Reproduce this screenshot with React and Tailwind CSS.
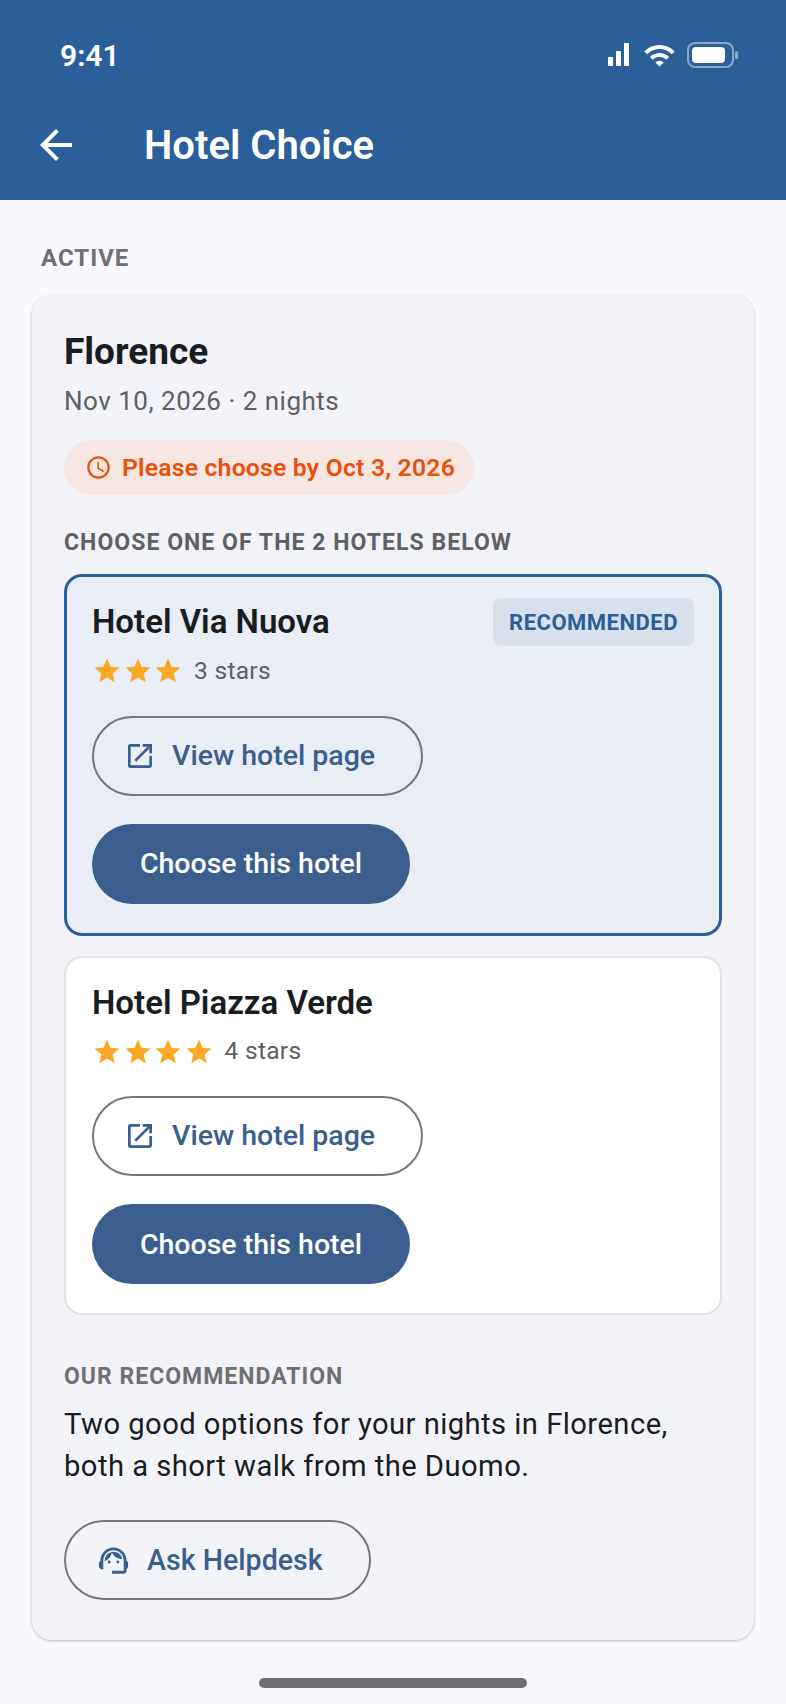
import React from 'react';
import { MdArrowBack, MdAccessTime, MdOpenInNew, MdStar, MdOutlineSupportAgent, MdWifi } from 'react-icons/md';

const hotels = [
  { name: 'Hotel Via Nuova', stars: 3, recommended: true },
  { name: 'Hotel Piazza Verde', stars: 4, recommended: false },
];

const SignalIcon = () => (
  <svg width="22" height="24" viewBox="0 0 22 24" fill="white">
    <rect x="0" y="14" width="5" height="9" rx="0.5" />
    <rect x="8" y="8" width="5" height="15" rx="0.5" />
    <rect x="16" y="0" width="5" height="23" rx="0.5" />
  </svg>
);

const BatteryIcon = () => (
  <svg width="52" height="26" viewBox="0 0 52 26" fill="none">
    <rect x="1" y="1" width="45" height="24" rx="7" stroke="white" strokeOpacity="0.45" strokeWidth="2" />
    <rect x="5" y="5" width="33" height="16" rx="4" fill="white" />
    <rect x="48" y="9" width="3" height="8" rx="1.5" fill="white" fillOpacity="0.45" />
  </svg>
);

const HotelCard = ({ hotel }) => (
  <div
    className={`rounded-[18px] pt-[21px] pb-[29px] ${
      hotel.recommended ? 'px-[25px] bg-[#e9edf6] border-[3px] border-[#2a5f9a]' : 'px-[26px] bg-white border-2 border-[#e1e2e6]'
    }`}
  >
    <div className="flex justify-between items-start">
      <h3 className="text-[33px] leading-[48px] font-semibold text-[#191c20]">{hotel.name}</h3>
      {hotel.recommended && (
        <span className="bg-[#d8e0ec] text-[#2a5f9a] rounded-[8px] h-[48px] w-[201px] flex items-center justify-center text-[22px] font-bold tracking-[0.5px]">
          RECOMMENDED
        </span>
      )}
    </div>
    <div className="flex items-center mt-[5px] h-[40px]">
      <div className="flex gap-[0.5px]">
        {Array.from({ length: hotel.stars }).map((_, i) => (
          <MdStar key={i} size={30} className="text-[#f9a825]" />
        ))}
      </div>
      <span className="ml-[11px] text-[24.5px] text-[#5f6063] tracking-[0.3px]">{hotel.stars} stars</span>
    </div>
    <a className="mt-[24.5px] w-[331px] h-[80px] rounded-full border-2 border-[#74777c] flex items-center pl-[30px] text-[#3a5f8e]">
      <MdOpenInNew size={32} />
      <span className="ml-[16px] pt-[1px] text-[28.5px] font-medium">View hotel page</span>
    </a>
    <button className="mt-[28px] w-[318px] h-[80px] pt-[2px] rounded-full bg-[#3a5f8e] text-white text-[28.5px] font-medium flex items-center justify-center">
      Choose this hotel
    </button>
  </div>
);

const App = () => {
  return (
    <div className="w-[786px] h-[1704px] overflow-hidden bg-[#f8f9ff] font-['Roboto',sans-serif] flex flex-col">
      <header className="h-[200px] bg-[#2a5f9a] text-white shrink-0">
        <div className="h-[110px] flex items-center justify-between pl-[60px] pr-[47px]">
          <span className="text-[30px] font-semibold">9:41</span>
          <div className="flex items-center">
            <SignalIcon />
            <MdWifi size={33} className="ml-[13px] mr-[11px]" />
            <BatteryIcon />
          </div>
        </div>
        <div className="h-[70px] flex items-center pl-[32px]">
          <MdArrowBack size={48} />
          <h1 className="ml-[64px] pt-[2px] text-[40px] font-semibold">Hotel Choice</h1>
        </div>
      </header>

      <main className="px-[32px] pt-[45px]">
        <p className="pl-[9px] text-[24px] leading-[26px] font-bold text-[#707070] tracking-[1px]">ACTIVE</p>
        <section className="mt-[24px] rounded-[20px] bg-[#f2f3f9] shadow-[0_1px_3px_rgba(0,0,0,0.25)] px-[32px] pt-[35px] pb-[40px]">
          <h2 className="text-[37px] leading-[44px] font-bold text-[#191c20]">Florence</h2>
          <p className="mt-[8px] text-[26px] leading-[38px] text-[#5f6063] tracking-[0.5px]">Nov 10, 2026 · 2 nights</p>
          <div className="mt-[20px] inline-flex items-center h-[55px] rounded-full bg-[#f5e6e2] pl-[21px] pr-[19px] text-[#e8500a]">
            <MdAccessTime size={27} />
            <span className="ml-[10px] text-[24.75px] font-semibold tracking-[0.2px]">Please choose by Oct 3, 2026</span>
          </div>
          <p className="mt-[33px] text-[23px] leading-[30px] font-bold text-[#5f6063] tracking-[1.05px]">CHOOSE ONE OF THE 2 HOTELS BELOW</p>
          <div className="mt-[16px] flex flex-col gap-[20px]">
            {hotels.map((hotel) => (
              <HotelCard key={hotel.name} hotel={hotel} />
            ))}
          </div>
          <p className="mt-[47px] text-[23px] leading-[30px] font-bold text-[#707070] tracking-[1px]">OUR RECOMMENDATION</p>
          <p className="mt-[11px] text-[29.2px] leading-[42px] text-[#191c20] tracking-[0.45px]">
            Two good options for your nights in Florence,
            <br />
            both a short walk from the Duomo.
          </p>
          <a className="mt-[33px] w-[307px] h-[80px] rounded-full border-2 border-[#74777c] flex items-center pl-[30px] text-[#3a5f8e]">
            <MdOutlineSupportAgent size={35} />
            <span className="ml-[16px] pt-[1px] text-[28.6px] font-medium">Ask Helpdesk</span>
          </a>
        </section>
      </main>

      <div className="mt-auto mb-[16px] mx-auto w-[268px] h-[10px] rounded-full bg-[#6f6f72]" />
    </div>
  );
};

export default App;
